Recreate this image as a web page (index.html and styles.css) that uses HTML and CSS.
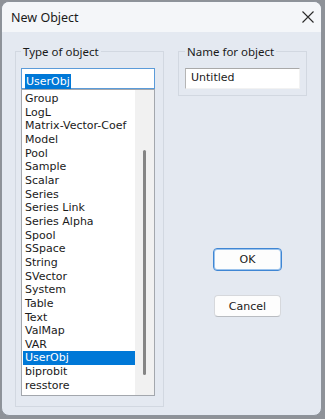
FILE: index.html
```html
<!DOCTYPE html>
<html>
<head>
<meta charset="utf-8">
<link rel="stylesheet" href="styles.css">
</head>
<body>
<div class="window">
  <div class="titlebar">
    <span class="title">New Object</span>
    <svg class="close" width="12" height="12" viewBox="0 0 12 12"><path d="M0.5 0.5 L11.5 11.5 M11.5 0.5 L0.5 11.5" stroke="#2b2b2b" stroke-width="1.1" fill="none"/></svg>
  </div>
  <div class="content">
    <fieldset class="group group-type">
      <legend>Type of object</legend>
      <div class="combo-edit"><span class="sel">UserObj</span></div>
      <div class="list">
        <div class="items">
          <div class="item">Group</div>
          <div class="item">LogL</div>
          <div class="item">Matrix-Vector-Coef</div>
          <div class="item">Model</div>
          <div class="item">Pool</div>
          <div class="item">Sample</div>
          <div class="item">Scalar</div>
          <div class="item">Series</div>
          <div class="item">Series Link</div>
          <div class="item">Series Alpha</div>
          <div class="item">Spool</div>
          <div class="item">SSpace</div>
          <div class="item">String</div>
          <div class="item">SVector</div>
          <div class="item">System</div>
          <div class="item">Table</div>
          <div class="item">Text</div>
          <div class="item">ValMap</div>
          <div class="item">VAR</div>
          <div class="item selected">UserObj</div>
          <div class="item">biprobit</div>
          <div class="item">resstore</div>
        </div>
        <div class="scrollbar"><div class="thumb"></div></div>
      </div>
    </fieldset>
    <div class="right">
      <fieldset class="group group-name">
        <legend>Name for object</legend>
        <div class="name-edit">Untitled</div>
      </fieldset>
      <button class="btn btn-ok">OK</button>
      <button class="btn btn-cancel">Cancel</button>
    </div>
  </div>
</div>
</body>
</html>
```
FILE: styles.css
```css
html, body {
  margin: 0;
  padding: 0;
}
body {
  background: #8e9298;
  width: 325px;
  height: 419px;
  overflow: hidden;
}
.window {
  margin: 1px 0 0 1px;
  width: 321px;
  height: 415px;
  box-sizing: border-box;
  border: 1px solid #8d939b;
  border-radius: 8px;
  background: #e4e9f1;
  overflow: hidden;
  display: flex;
  flex-direction: column;
}
.titlebar {
  height: 30px;
  flex: none;
  background: #f4f6f9;
  display: flex;
  align-items: center;
  justify-content: space-between;
  padding: 0 7px 0 9px;
}
.title {
  font-family: "Noto Sans", sans-serif;
  font-size: 12.5px;
  color: #1a1a1a;
}
.close {
  display: block;
  margin-top: -1px;
}
.content {
  display: flex;
  align-items: flex-start;
  padding-left: 13px;
  gap: 14px;
}
.group {
  margin: 12px 0 0 0;
  border: 1px solid #d2d8e1;
  box-sizing: border-box;
  min-width: 0;
}
.group legend {
  font-family: "Noto Sans", sans-serif;
  font-size: 11.5px;
  line-height: 15px;
  color: #1a1a1a;
  padding: 0 2px;
}
.group-type {
  width: 149px;
  padding: 9px 8px 10px 5px;
}
.combo-edit {
  height: 21px;
  box-sizing: border-box;
  border: 1px solid #5b9bd9;
  background: #ffffff;
  padding: 2px 0 0 3px;
}
.sel {
  display: inline-block;
  background: #0078d7;
  color: #ffffff;
  font-family: "DejaVu Sans", sans-serif;
  font-size: 11px;
  line-height: 15px;
  padding: 0 1px;
}
.list {
  height: 307px;
  box-sizing: border-box;
  border: 1px solid #a3a7ad;
  background: #ffffff;
  display: flex;
}
.items {
  width: 113px;
  padding-top: 2px;
}
.item {
  font-family: "DejaVu Sans", sans-serif;
  font-size: 11px;
  line-height: 13.66px;
  height: 13.66px;
  color: #1a1a1a;
  padding-left: 2px;
  margin-left: 1px;
  white-space: nowrap;
}
.item.selected {
  background: #0078d7;
  color: #ffffff;
}
.scrollbar {
  width: 19px;
  background: #f1f1f1;
}
.thumb {
  width: 3px;
  height: 225px;
  margin: 60px 0 0 8px;
  border-radius: 2px;
  background: #858585;
}
.right {
  display: flex;
  flex-direction: column;
  align-items: flex-start;
}
.group-name {
  width: 129px;
  padding: 9px 6px 6px 6px;
}
.group-name legend {
  margin-left: 0;
}
.name-edit {
  height: 21px;
  box-sizing: border-box;
  background: #ffffff;
  border: 1px solid #f2f2f2;
  border-top-color: #a9a9a9;
  border-left-color: #b5b5b5;
  font-family: "DejaVu Sans", sans-serif;
  font-size: 11px;
  line-height: 18px;
  padding-left: 5px;
  color: #1a1a1a;
}
.btn {
  font-family: "DejaVu Sans", sans-serif;
  font-size: 11px;
  color: #1a1a1a;
  background: #fdfdfd;
  box-sizing: border-box;
  padding: 0;
  border-radius: 4px;
}
.btn-ok {
  width: 69px;
  height: 23px;
  margin: 152px 0 0 35px;
  border: 1px solid #3f86d4;
  box-shadow: inset 0 0 0 1px #9cc3ec;
}
.btn-cancel {
  width: 67px;
  height: 22px;
  margin: 24px 0 0 36px;
  border: 1px solid #d6d8dc;
  border-bottom-color: #b9bcc1;
}
```
